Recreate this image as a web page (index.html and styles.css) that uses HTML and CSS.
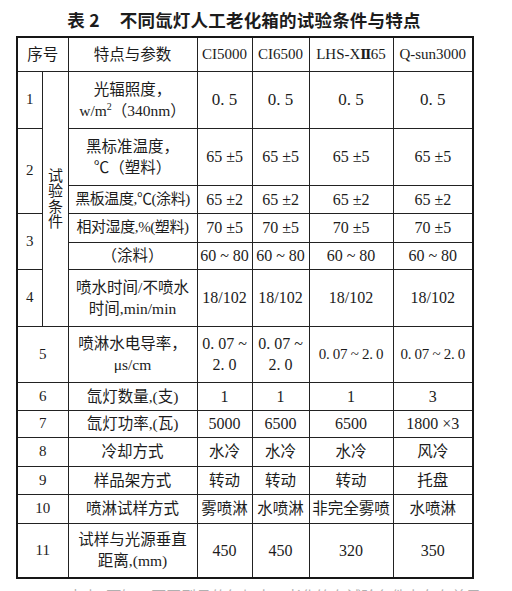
FILE: index.html
```html
<!DOCTYPE html>
<html lang="zh-CN">
<head>
<meta charset="utf-8">
<title>表2 不同氙灯人工老化箱的试验条件与特点</title>
<link rel="stylesheet" href="styles.css">
</head>
<body>
<div class="page">
  <h1 class="title"><span class="tno">表 2</span>不同氙灯人工老化箱的试验条件与特点</h1>
  <table class="grid">
    <colgroup>
      <col class="c-a"><col class="c-b"><col class="c-c"><col class="c-d"><col class="c-e"><col class="c-f"><col class="c-g">
    </colgroup>
    <tr class="h34">
      <td colspan="2" class="cjk">序号</td>
      <td class="cjk">特点与参数</td>
      <td class="hd">CI5000</td>
      <td class="hd">CI6500</td>
      <td class="hd">LHS-X<span class="roman">Ⅱ</span>65</td>
      <td class="hd">Q-sun3000</td>
    </tr>
    <tr class="h57">
      <td class="no">1</td>
      <td rowspan="6" class="vcell"><span class="vert">试验条件</span></td>
      <td class="cjk two">光辐照度，<br>w/m<sup>2</sup>（340nm）</td>
      <td class="num big">0. 5</td>
      <td class="num big">0. 5</td>
      <td class="num big">0. 5</td>
      <td class="num big">0. 5</td>
    </tr>
    <tr class="h57">
      <td rowspan="2" class="no">2</td>
      <td class="cjk two">黑标准温度，<br>℃（塑料）</td>
      <td class="num">65 ±5</td>
      <td class="num">65 ±5</td>
      <td class="num">65 ±5</td>
      <td class="num">65 ±5</td>
    </tr>
    <tr class="h28">
      <td class="cjk tight">黑板温度,℃(涂料)</td>
      <td class="num">65 ±2</td>
      <td class="num">65 ±2</td>
      <td class="num">65 ±2</td>
      <td class="num">65 ±2</td>
    </tr>
    <tr class="h29">
      <td rowspan="2" class="no">3</td>
      <td class="cjk tight">相对湿度,%(塑料)</td>
      <td class="num">70 ±5</td>
      <td class="num">70 ±5</td>
      <td class="num">70 ±5</td>
      <td class="num">70 ±5</td>
    </tr>
    <tr class="h27">
      <td class="cjk">（涂料）</td>
      <td class="num">60 ~ 80</td>
      <td class="num">60 ~ 80</td>
      <td class="num">60 ~ 80</td>
      <td class="num">60 ~ 80</td>
    </tr>
    <tr class="h57">
      <td class="no">4</td>
      <td class="cjk two">喷水时间/不喷水<br>时间,min/min</td>
      <td class="num">18/102</td>
      <td class="num">18/102</td>
      <td class="num">18/102</td>
      <td class="num">18/102</td>
    </tr>
    <tr class="h56">
      <td colspan="2" class="no">5</td>
      <td class="cjk two">喷淋水电导率，<br>μs/cm</td>
      <td class="num two">0. 07 ~<br>2. 0</td>
      <td class="num two">0. 07 ~<br>2. 0</td>
      <td class="num narrow">0. 07 ~ 2. 0</td>
      <td class="num narrow">0. 07 ~ 2. 0</td>
    </tr>
    <tr class="h28">
      <td colspan="2" class="no">6</td>
      <td class="cjk">氙灯数量,(支)</td>
      <td class="num">1</td>
      <td class="num">1</td>
      <td class="num">1</td>
      <td class="num">3</td>
    </tr>
    <tr class="h27">
      <td colspan="2" class="no">7</td>
      <td class="cjk">氙灯功率,(瓦)</td>
      <td class="num">5000</td>
      <td class="num">6500</td>
      <td class="num">6500</td>
      <td class="num">1800 ×3</td>
    </tr>
    <tr class="h29">
      <td colspan="2" class="no">8</td>
      <td class="cjk">冷却方式</td>
      <td class="cjk">水冷</td>
      <td class="cjk">水冷</td>
      <td class="cjk">水冷</td>
      <td class="cjk">风冷</td>
    </tr>
    <tr class="h28">
      <td colspan="2" class="no">9</td>
      <td class="cjk">样品架方式</td>
      <td class="cjk">转动</td>
      <td class="cjk">转动</td>
      <td class="cjk">转动</td>
      <td class="cjk">托盘</td>
    </tr>
    <tr class="h29">
      <td colspan="2" class="no">10</td>
      <td class="cjk">喷淋试样方式</td>
      <td class="cjk">雾喷淋</td>
      <td class="cjk">水喷淋</td>
      <td class="cjk">非完全雾喷</td>
      <td class="cjk">水喷淋</td>
    </tr>
    <tr class="h55">
      <td colspan="2" class="no">11</td>
      <td class="cjk two">试样与光源垂直<br>距离,(mm)</td>
      <td class="num">450</td>
      <td class="num">450</td>
      <td class="num">320</td>
      <td class="num">350</td>
    </tr>
  </table>
  <p class="after">由表2可知，不同型号的氙灯人工老化箱在试验条件上存在差异。</p>
</div>
</body>
</html>
```
FILE: styles.css
```css
html, body {
  margin: 0;
  padding: 0;
  background: #ffffff;
}
body {
  font-family: "Liberation Serif", "Noto Sans CJK SC", serif;
  color: #1c1c1c;
  overflow: hidden;
}
.page {
  width: 456px;
  padding: 8px 0 0 16px;
}
.title {
  margin: 0;
  height: 24px;
  line-height: 24px;
  font-family: "Noto Sans CJK SC", sans-serif;
  font-weight: 700;
  font-size: 17.5px;
  text-align: center;
  letter-spacing: 0.2px;
}
.tno {
  margin-right: 20px;
}
.grid {
  margin-top: 4px;
  width: 456px;
  border-collapse: collapse;
  table-layout: fixed;
  border: 2px solid #161616;
}
.c-a { width: 25px; }
.c-b { width: 26px; }
.c-c { width: 129px; }
.c-d { width: 55px; }
.c-e { width: 57px; }
.c-f { width: 84px; }
.c-g { width: 80px; }
.grid td {
  border: 1px solid #222222;
  padding: 0;
  text-align: center;
  vertical-align: middle;
  white-space: nowrap;
  overflow: hidden;
}
.grid td.cjk {
  font-size: 15.5px;
  line-height: 21px;
}
.grid td.tight {
  font-size: 15px;
  letter-spacing: -0.4px;
}
.grid td.hd {
  font-size: 15px;
}
.roman {
  font-family: "DejaVu Serif", "DejaVu Sans", serif;
  font-weight: 700;
  font-size: 13px;
  letter-spacing: -0.5px;
}
.grid td.num {
  font-size: 16px;
  line-height: 21px;
}
.grid td.big {
  font-size: 17px;
}
.grid td.narrow {
  font-size: 15px;
  letter-spacing: -0.3px;
}
.grid td.no {
  font-size: 15px;
}
.grid td.vcell {
  padding-top: 4px;
}
.vert {
  display: inline-block;
  writing-mode: vertical-rl;
  text-orientation: upright;
  font-family: "Noto Sans CJK SC", sans-serif;
  font-size: 15px;
  line-height: 16px;
  letter-spacing: 0.3px;
}
.grid sup {
  font-size: 10px;
  line-height: 0;
}
.h34 { height: 34px; }
.h57 { height: 57px; }
.h56 { height: 56px; }
.h55 { height: 55px; }
.h29 { height: 29px; }
.h28 { height: 28px; }
.h27 { height: 27px; }
.after {
  margin: 7px 0 0 0;
  text-indent: 52px;
  font-family: "Noto Sans CJK SC", sans-serif;
  font-size: 15px;
  line-height: 20px;
  color: #b0b0b0;
  white-space: nowrap;
}
```
